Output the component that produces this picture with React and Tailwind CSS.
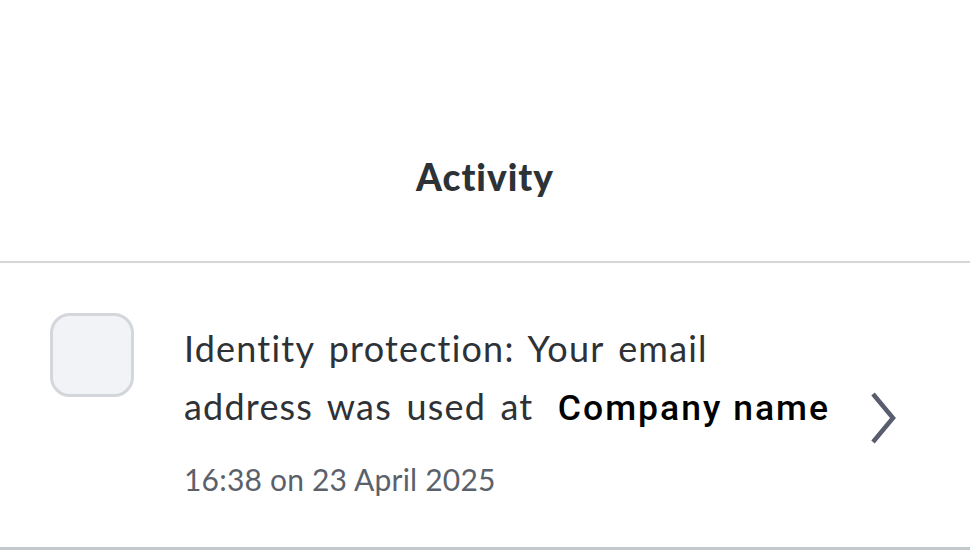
const Chevron = () => (
  <svg width="30" height="54" viewBox="0 0 30 54" className="shrink-0 mt-[78px] ml-[29px]">
    <polyline points="4,3 24,27 4,51" fill="none" stroke="#585e6d" strokeWidth="4.5" strokeLinecap="butt" strokeLinejoin="miter" />
  </svg>
);

const App = () => {
  return (
    <div className="w-[970px] h-[553px] bg-white overflow-hidden" style={{ fontFamily: 'Lato, "Open Sans", sans-serif' }}>
      {/* header */}
      <div className="h-[263px] flex items-end justify-center pb-[66px] border-b-2 border-[#d4d6d8]">
        <h1 className="text-[37px] font-black tracking-[1px] text-[#2d3236] leading-none">Activity</h1>
      </div>

      {/* activity row */}
      <div className="flex items-start pl-[50px] pt-[50px] h-[287px] border-b-[3px] border-[#c3c8ca]">
        <div className="w-[84px] h-[84px] rounded-[20px] border-[3px] border-[#d3d6da] bg-[#f1f3f6] shrink-0" />
        <div className="ml-[50px] w-[656px] pt-[6px]">
          <p className="text-[36px] tracking-[1.2px] [word-spacing:4px] leading-[58px] text-[#2e3236]">
            Identity protection: Your email address was used at{' '}
            <span className="ml-[10px] text-black font-medium text-[35.5px] tracking-[2px] [word-spacing:0px]" style={{ fontFamily: 'Roboto, sans-serif' }}>
              Company name
            </span>
          </p>
          <p className="text-[30px] tracking-[0.2px] text-[#5b616b] mt-[27px] leading-none">16:38 on 23 April 2025</p>
        </div>
        <Chevron />
      </div>
    </div>
  );
};

export default App;
